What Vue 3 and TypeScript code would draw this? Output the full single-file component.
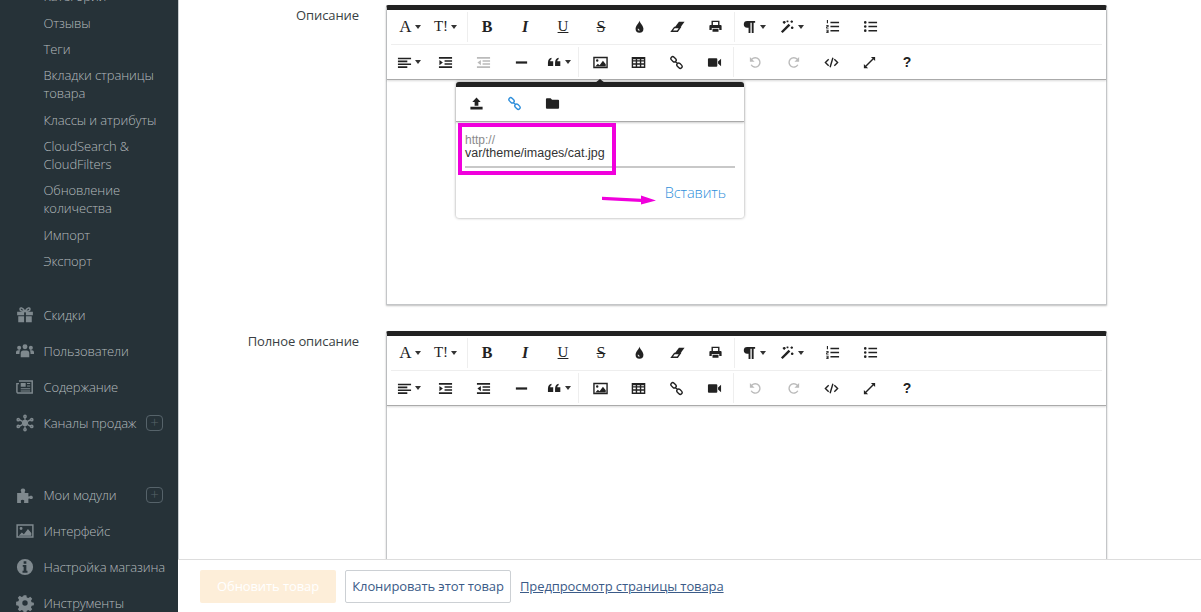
<script setup lang="ts">
interface Glyph {
  f?: string
  s?: string
}
interface Btn {
  icon?: string
  text?: string
  cls?: string
  caret?: boolean
  off?: boolean
}
interface Group {
  cls: string
  btns: Btn[]
}

const icons: Record<string, Glyph> = {
  drop: { f: 'M8 1.5C8 3.5 3.8 7 3.8 10.5a4.2 4.2 0 0 0 8.4 0C12.2 7 8 3.5 8 1.5z M6 10.5a2 2 0 0 0 2 2v-1a1 1 0 0 1-1-1z' },
  eraser: { f: 'M9.5 3H15.5L11 9H5z', s: 'M4.8 9h6l-2.8 4H1.8z' },
  print: {
    f: 'M1.5 7.5a1 1 0 0 1 1-1h11a1 1 0 0 1 1 1v4.2H12V9.5H4v2.2H1.5z M4.8 10.5h6.4v3.2H4.8z',
    s: 'M4.5 6.5V2.5h7v4',
  },
  para: { f: 'M5.5 2H14v2h-1.6v11h-2V4H9v11H7V9.2h-1.5a3.6 3.6 0 0 1 0-7.2z' },
  wand: { f: 'M1 13.2 9.2 5l1.8 1.8-8.2 8.2z', s: 'M4.5 2v3M3 3.5h3M12.5 1.5v2.6M11.2 2.8h2.6M13 8v2.6M11.7 9.3h2.6M8 1.5v2M7 2.5h2' },
  ol: {
    f: 'M5.8 2.8H15v1.7H5.8z M5.8 7.2H15v1.7H5.8z M5.8 11.6H15v1.7H5.8z M2 1h1.2v3.6H2z M1.2 6.4h2.6v2.2H2.4v.6h1.4v.8H1.2V8h1.4v-.8H1.2z M1.2 11.4h2.6V15H1.2v-.8h1.4v-.6H1.6v-.7h1v-.7H1.2z',
  },
  ul: {
    f: 'M5.8 2.8H15v1.7H5.8z M5.8 7.2H15v1.7H5.8z M5.8 11.6H15v1.7H5.8z M1 3.6a1.4 1.4 0 1 0 2.8 0a1.4 1.4 0 1 0-2.8 0z M1 8a1.4 1.4 0 1 0 2.8 0a1.4 1.4 0 1 0-2.8 0z M1 12.4a1.4 1.4 0 1 0 2.8 0a1.4 1.4 0 1 0-2.8 0z',
  },
  align: { f: 'M1 2.8h14v1.7H1z M1 5.9h10v1.7H1z M1 9h14v1.7H1z M1 12.1h10v1.7H1z' },
  indent: { f: 'M1 2.2h14V4H1z M7 5.5h8v1.8H7z M7 8.7h8v1.8H7z M1 12h14v1.8H1z M1.5 5.2 5.2 8l-3.7 2.8z' },
  outdent: { f: 'M1 2.2h14V4H1z M7 5.5h8v1.8H7z M7 8.7h8v1.8H7z M1 12h14v1.8H1z M5.2 5.2 1.5 8l3.7 2.8z' },
  hr: { f: 'M2 6.8h12v2.4H2z' },
  quote: {
    f: 'M1 8.2c0-3 1.5-4.6 3.8-5.2v1.6c-.9.3-1.4 1-1.4 2h3.2v5H1z M8.6 8.2c0-3 1.5-4.6 3.8-5.2v1.6c-.9.3-1.4 1-1.4 2h3.2v5H8.6z',
  },
  image: {
    f: 'M2.4 12.2 5.2 9.4l1.8 1.4 3.6-4.6 3 3.6v2.4z M3.2 5.8a1.3 1.3 0 1 0 2.6 0a1.3 1.3 0 1 0-2.6 0z',
    s: 'M1 2.6h14v10.8H1z',
  },
  table: { f: 'M1.5 3h13v1.5h-13z', s: 'M1.5 3h13v10h-13z M1.5 6.3h13 M1.5 9.6h13 M5.8 3v10 M10.2 3v10' },
  link: {
    s: 'M2.6 2.4a2 2 0 0 1 2.8 0l1.7 1.7a2 2 0 0 1 0 2.8a2 2 0 0 1-2.8 0L2.6 5.2a2 2 0 0 1 0-2.8z M8.9 9.1a2 2 0 0 1 2.8 0l1.7 1.7a2 2 0 0 1 0 2.8a2 2 0 0 1-2.8 0l-1.7-1.7a2 2 0 0 1 0-2.8z M6.4 6.4l3.2 3.2',
  },
  video: { f: 'M1 4.5a1 1 0 0 1 1-1h8a1 1 0 0 1 1 1v7a1 1 0 0 1-1 1H2a1 1 0 0 1-1-1z M11.8 7 15 4v8l-3.2-3z' },
  undo: { f: 'M2 2.2v5h5z', s: 'M4 4.6A5 5 0 1 1 3.4 10.4' },
  redo: { f: 'M14 2.2v5H9z', s: 'M12 4.6A5 5 0 1 0 12.6 10.4' },
  code: { s: 'M5 4.5 1.5 8 5 11.5 M11 4.5 14.5 8 11 11.5 M9.5 3 6.5 13' },
  full: { f: 'M9.5 2H14v4.5z M2 9.5V14h4.5z', s: 'M4 12l8-8' },
  upload: { f: 'M8 1.5l4.5 5H10v4H6v-4H3.5z M1.5 11.5h13v3h-13z' },
  folder: { f: 'M1 3.5a1 1 0 0 1 1-1h4L7.5 4H14a1 1 0 0 1 1 1v7.5a1 1 0 0 1-1 1H2a1 1 0 0 1-1-1z' },
  gift: {
    f: 'M1 5.2h6.2V8.2H1z M8.8 5.2H15V8.2H8.8z M2 9h5.2v5.5H2z M8.8 9H14v5.5H8.8z',
    s: 'M8 4.8C6 1 3.4 1 3.6 3c.1 1.4 2.4 1.8 4.4 1.8s4.3-.4 4.4-1.8C12.6 1 10 1 8 4.8z',
  },
  users: {
    f: 'M5.8 4.2a2.2 2.2 0 1 0 4.4 0a2.2 2.2 0 1 0-4.4 0z M1 5.2a1.8 1.8 0 1 0 3.6 0a1.8 1.8 0 1 0-3.6 0z M11.4 5.2a1.8 1.8 0 1 0 3.6 0a1.8 1.8 0 1 0-3.6 0z M4.2 13.5V9.8c0-1.4 1-2.2 2.2-2.2h3.2c1.2 0 2.2.8 2.2 2.2v3.7z M0 10.6V9c0-1 .8-1.7 1.8-1.7h2c-.5.6-.7 1.4-.7 2.2v1.1z M16 10.6V9c0-1-.8-1.7-1.8-1.7h-2c.5.6.7 1.4.7 2.2v1.1z',
  },
  news: {
    f: 'M4.2 4.4h4.4v3.4H4.2z M9.8 4.4h2.8v1H9.8z M9.8 6.6h2.8v1H9.8z M4.2 9h8.4v1H4.2z M4.2 11h8.4v1H4.2z',
    s: 'M2.6 2.6h11.8v10.8H2.2A1.4 1.4 0 0 1 .8 12V5h1.8',
  },
  star: {
    f: 'M5.2 8a2.8 2.8 0 1 0 5.6 0a2.8 2.8 0 1 0-5.6 0z',
    s: 'M8 5V3 M8 11v2 M5.6 6.5 3 5 M10.4 9.5 13 11 M5.6 9.5 3 11 M10.4 6.5 13 5 M1 5a1 1 0 1 0 2 0a1 1 0 1 0-2 0z M13 5a1 1 0 1 0 2 0a1 1 0 1 0-2 0z M1 11a1 1 0 1 0 2 0a1 1 0 1 0-2 0z M13 11a1 1 0 1 0 2 0a1 1 0 1 0-2 0z M7 2.2a1 1 0 1 0 2 0a1 1 0 1 0-2 0z M7 13.8a1 1 0 1 0 2 0a1 1 0 1 0-2 0z',
  },
  puzzle: {
    f: 'M1 6.2h3.2c.6 0 .7-.5.4-1-.9-1.3-.4-3 1.6-3s2.5 1.7 1.6 3c-.3.5-.2 1 .4 1h2.8v2.6c0 .6.5.7 1 .4 1.3-.9 3-.4 3 1s-1.7 1.9-3 1c-.5-.3-1-.2-1 .4V15H7.600c-.6 0-.7-.5-.4-1 .5-1-.2-1.800-1.400-1.800s-1.900.8-1.400 1.800c.3.5.2 1-.4 1H1z',
  },
  info: {
    f: 'M8 .8a7.200 7.200 0 1 0 0 14.400A7.200 7.200 0 0 0 8 .8z M6.800 2.800h2.400v2.200H6.800z M6 6.200h3.200v5.200h1v1.600H5.800v-1.600h1V7.800H6z',
  },
  gear: {
    f: 'M6.800 1h2.400l.4 2 1.400.6 1.700-1.100 1.700 1.700-1.100 1.700.6 1.400 2 .4v2.400l-2 .4-.6 1.400 1.100 1.700-1.700 1.700-1.700-1.100-1.400.6-.4 2H6.800l-.4-2-1.400-.6-1.700 1.100-1.700-1.700 1.100-1.700-.6-1.400-2-.4V6.800l2-.4.6-1.400-1.100-1.700 1.700-1.700L5 2.700l1.400-.6z M8 5.600a2.400 2.400 0 1 0 0 4.800 2.400 2.400 0 0 0 0-4.800z',
  },
}

const subItems = [
  ['Категории'],
  ['Отзывы'],
  ['Теги'],
  ['Вкладки страницы', 'товара'],
  ['Классы и атрибуты'],
  ['CloudSearch &', 'CloudFilters'],
  ['Обновление', 'количества'],
  ['Импорт'],
  ['Экспорт'],
]
const menuTop = [
  { icon: 'gift', label: 'Скидки' },
  { icon: 'users', label: 'Пользователи' },
  { icon: 'news', label: 'Содержание' },
  { icon: 'star', label: 'Каналы продаж', plus: true },
]
const menuBottom = [
  { icon: 'puzzle', label: 'Мои модули', plus: true },
  { icon: 'image', label: 'Интерфейс' },
  { icon: 'info', label: 'Настройка магазина' },
  { icon: 'gear', label: 'Инструменты' },
]

const firstRow: Group[] = [
  {
    cls: 'g-first',
    btns: [
      { text: 'A', cls: 'tx-a', caret: true },
      { text: 'T!', cls: 'tx-t', caret: true },
    ],
  },
  {
    cls: 'g-mid',
    btns: [
      { text: 'B', cls: 'tx-b' },
      { text: 'I', cls: 'tx-i' },
      { text: 'U', cls: 'tx-u' },
      { text: 'S', cls: 'tx-s' },
      { icon: 'drop' },
      { icon: 'eraser' },
      { icon: 'print' },
    ],
  },
  {
    cls: 'g-plain',
    btns: [
      { icon: 'para', caret: true },
      { icon: 'wand', caret: true },
    ],
  },
  { cls: 'g-lists', btns: [{ icon: 'ol' }, { icon: 'ul' }] },
]

const secondRow = (outdentOff: boolean): Group[] => [
  {
    cls: 'g-second',
    btns: [
      { icon: 'align', caret: true, cls: 'narrow' },
      { icon: 'indent' },
      { icon: 'outdent', off: outdentOff },
      { icon: 'hr' },
      { icon: 'quote', caret: true },
    ],
  },
  {
    cls: 'g-media',
    btns: [{ icon: 'image' }, { icon: 'table' }, { icon: 'link' }, { icon: 'video' }],
  },
  {
    cls: 'g-tools',
    btns: [
      { icon: 'undo', off: true },
      { icon: 'redo', off: true },
      { icon: 'code' },
      { icon: 'full' },
      { text: '?', cls: 'tx-q' },
    ],
  },
]

const editors = [
  { label: 'Описание', rows: [firstRow, secondRow(true)], popup: true },
  { label: 'Полное описание', rows: [firstRow, secondRow(false)], popup: false },
]

const popupIcons = [
  { icon: 'upload', active: false },
  { icon: 'link', active: true },
  { icon: 'folder', active: false },
]
</script>

<template>
  <div class="page">
    <aside class="sidebar">
      <ul class="sub">
        <li v-for="item in subItems" :key="item[0]">
          <div v-for="line in item" :key="line">{{ line }}</div>
        </li>
      </ul>
      <ul class="menu">
        <li v-for="m in menuTop" :key="m.label">
          <svg class="side-ico" viewBox="0 0 16 16">
            <path v-if="icons[m.icon].f" :d="icons[m.icon].f" class="fl" />
            <path v-if="icons[m.icon].s" :d="icons[m.icon].s" class="st" />
          </svg>
          <span>{{ m.label }}</span>
          <i v-if="m.plus" class="plus">+</i>
        </li>
      </ul>
      <ul class="menu menu-low">
        <li v-for="m in menuBottom" :key="m.label">
          <svg class="side-ico" viewBox="0 0 16 16">
            <path v-if="icons[m.icon].f" :d="icons[m.icon].f" class="fl" />
            <path v-if="icons[m.icon].s" :d="icons[m.icon].s" class="st" />
          </svg>
          <span>{{ m.label }}</span>
          <i v-if="m.plus" class="plus">+</i>
        </li>
      </ul>
    </aside>

    <main class="main">
      <div class="content">
        <div v-for="ed in editors" :key="ed.label" class="field">
          <label class="field-label">{{ ed.label }}</label>
          <div class="editor" :class="{ 'editor-short': ed.popup }">
            <div class="toolbar">
              <div v-for="(row, ri) in ed.rows" :key="ri" class="tool-row">
                <div v-for="group in row" :key="group.cls" class="group" :class="group.cls">
                  <span
                    v-for="(b, bi) in group.btns"
                    :key="bi"
                    class="btn"
                    :class="[b.cls, { off: b.off }]"
                  >
                    <svg v-if="b.icon" class="ico" viewBox="0 0 16 16">
                      <path v-if="icons[b.icon].f" :d="icons[b.icon].f" class="fl" />
                      <path v-if="icons[b.icon].s" :d="icons[b.icon].s" class="st" />
                    </svg>
                    <template v-else>{{ b.text }}</template>
                    <em v-if="b.caret" class="caret"></em>
                  </span>
                </div>
              </div>
            </div>
            <div class="body">
              <div v-if="ed.popup" class="popup">
                <div class="popup-bar">
                  <span
                    v-for="p in popupIcons"
                    :key="p.icon"
                    class="btn"
                    :class="{ active: p.active }"
                  >
                    <svg class="ico" viewBox="0 0 16 16">
                      <path v-if="icons[p.icon].f" :d="icons[p.icon].f" class="fl" />
                      <path v-if="icons[p.icon].s" :d="icons[p.icon].s" class="st" />
                    </svg>
                  </span>
                </div>
                <div class="popup-form">
                  <div class="hint">http://</div>
                  <div class="url">var/theme/images/cat.jpg</div>
                </div>
                <div class="popup-foot"><span class="insert">Вставить</span></div>
                <div class="mark"></div>
                <svg class="arrow" width="56" height="12" viewBox="0 0 56 12">
                  <path d="M0 2.800 39 4.800V1.500L54 6.500 39 10.500V8L0 6z" />
                </svg>
              </div>
            </div>
          </div>
        </div>
      </div>
      <footer class="footer">
        <button class="update" type="button">Обновить товар</button>
        <button class="clone" type="button">Клонировать этот товар</button>
        <a class="preview">Предпросмотр страницы товара</a>
      </footer>
    </main>
  </div>
</template>

<style>
html,
body {
  margin: 0;
  background: #fff;
  overflow: hidden;
}
</style>

<style scoped>
.page {
  display: flex;
  height: 612px;
  overflow: hidden;
  font-family: 'Open Sans', 'Liberation Sans', sans-serif;
  font-size: 13px;
  letter-spacing: -0.1px;
}

/* боковое меню */
.sidebar {
  width: 178px;
  flex-shrink: 0;
  background: #263238;
  color: #b4babd;
  font-weight: 300;
  overflow: hidden;
  border-right: 1px solid #c9ced1;
  white-space: nowrap;
}
.sub,
.menu {
  list-style: none;
  margin: 0;
  padding: 0;
}
.sub {
  margin-top: -17px;
  padding-left: 43.5px;
}
.sub li {
  padding: 4.2px 0;
  line-height: 18px;
}
.menu {
  margin-top: 23px;
}
.menu-low {
  margin-top: 36px;
}
.menu li {
  display: flex;
  align-items: center;
  height: 36px;
  padding: 0 15px 0 16px;
}
.menu span {
  letter-spacing: -0.15px;
}
.side-ico {
  width: 18px;
  height: 18px;
  margin-right: 9.5px;
  flex-shrink: 0;
  color: #7f898e;
}
.plus {
  margin-left: auto;
  width: 15px;
  height: 14px;
  border: 1px solid #56636a;
  border-radius: 4px;
  color: #56636a;
  font-style: normal;
  font-size: 15px;
  line-height: 13px;
  text-align: center;
}
.fl {
  fill: currentColor;
  fill-rule: evenodd;
}
.st {
  fill: none;
  stroke: currentColor;
  stroke-width: 1.3;
}
.ico .st {
  stroke-width: 1.5;
}

/* контент */
.main {
  flex: 1;
  display: flex;
  flex-direction: column;
  min-width: 0;
}
.content {
  flex: 1;
  min-height: 0;
  overflow: hidden;
  padding-top: 5px;
}
.field {
  display: grid;
  grid-template-columns: 180px 721px;
  column-gap: 27px;
  margin-bottom: 26px;
}
.field-label {
  text-align: right;
  color: #3a3f44;
  line-height: 21px;
  font-weight: 400;
}
.editor {
  box-sizing: border-box;
  border: 1px solid #c4c6c8;
  border-top: 5px solid #222;
  border-radius: 2px 2px 0 0;
  box-shadow: 0 1px 2px rgba(0, 0, 0, 0.25);
  height: 400px;
  position: relative;
}
.editor-short {
  height: 300px;
}
.toolbar {
  border-bottom: 1px solid #aaa;
  box-shadow: 0 1px 2px rgba(0, 0, 0, 0.15);
  height: 70px;
  box-sizing: border-box;
  padding: 0 4px;
}
.tool-row {
  display: flex;
  height: 34px;
  align-items: center;
}
.tool-row + .tool-row {
  height: 35px;
  border-top: 1px solid #eee;
}
.group {
  display: flex;
  align-items: center;
  height: 30px;
  margin-top: -1px;
}
.g-first,
.g-mid,
.g-second,
.g-media {
  border-right: 1px solid #eee;
}
.g-lists {
  margin-left: 2px;
}
.g-media,
.g-tools {
  margin-left: 2px;
}
.btn {
  width: 38px;
  height: 30px;
  display: flex;
  align-items: center;
  justify-content: center;
  color: #222;
  flex-shrink: 0;
  font-family: 'Liberation Serif', serif;
  letter-spacing: 0;
  box-sizing: border-box;
}
.narrow {
  width: 35px;
}
.off {
  color: #bbb;
}
.ico {
  width: 15px;
  height: 15px;
}
.caret {
  display: block;
  margin-left: 3px;
  border-left: 3.5px solid transparent;
  border-right: 3.5px solid transparent;
  border-top: 4px solid #333;
}
.tx-a {
  font-size: 17px;
}
.tx-t {
  font-size: 15px;
  padding-right: 5px;
}
.tx-b {
  font-size: 16px;
  font-weight: 700;
}
.tx-i {
  font-size: 16px;
  font-weight: 700;
  font-style: italic;
}
.tx-u {
  font-size: 15px;
  text-decoration: underline;
}
.tx-s {
  font-size: 16px;
  text-decoration: line-through;
}
.tx-q {
  font-family: 'Liberation Sans', sans-serif;
  font-size: 14px;
  font-weight: 700;
}
.body {
  position: relative;
}

/* окно вставки картинки */
.popup {
  position: absolute;
  left: 69px;
  top: 2px;
  width: 288px;
  height: 136px;
  box-sizing: border-box;
  background: #fff;
  border-top: 5px solid #222;
  border-radius: 3px;
  box-shadow: 0 0 3px rgba(0, 0, 0, 0.4);
}
.popup::before {
  content: '';
  position: absolute;
  left: 139px;
  top: -8px;
  border-left: 5px solid transparent;
  border-right: 5px solid transparent;
  border-bottom: 4px solid #222;
}
.popup-bar {
  display: flex;
  box-sizing: border-box;
  height: 35px;
  padding: 0 0 2px 1px;
  align-items: center;
  border-bottom: 1px solid #aaa;
  box-shadow: 0 1px 2px rgba(0, 0, 0, 0.2);
}
.active {
  color: #2f8fdb;
}
.popup-form {
  margin: 12px 9px 0;
  height: 32px;
  border-bottom: 2px solid #c8c8c8;
  font-family: 'Liberation Sans', sans-serif;
  letter-spacing: 0;
}
.hint {
  font-size: 12px;
  color: #8a8a8a;
  line-height: 13px;
}
.url {
  font-size: 12.5px;
  color: #333;
  line-height: 13px;
}
.popup-foot {
  text-align: right;
  padding: 14px 18px 0 0;
}
.insert {
  color: #2f8fdb;
  font-size: 14.6px;
  font-weight: 300;
  line-height: 20px;
}
.mark {
  position: absolute;
  left: 2px;
  top: 36px;
  width: 158px;
  height: 52px;
  box-sizing: border-box;
  border: 4px solid #f000dc;
}
.arrow {
  position: absolute;
  left: 146px;
  top: 107px;
  fill: #f000dc;
}

/* нижняя панель */
.footer {
  height: 53px;
  flex-shrink: 0;
  box-sizing: border-box;
  border-top: 1px solid #ddd;
  background: #fff;
  display: flex;
  align-items: center;
  padding: 0 0 0 22px;
  position: relative;
  margin-left: -1px;
}
.update,
.clone {
  height: 33px;
  font-family: inherit;
  font-size: 13px;
  border-radius: 2px;
  padding: 0;
  letter-spacing: -0.1px;
}
.update {
  width: 136px;
  background: #fdeed9;
  border: 0;
  color: #fff;
}
.clone {
  width: 166px;
  margin-left: 9px;
  background: #fff;
  border: 1px solid #ccd0d4;
  color: #3b5b88;
}
.preview {
  margin-left: 9px;
  color: #3b5b88;
  text-decoration: underline;
}
</style>
